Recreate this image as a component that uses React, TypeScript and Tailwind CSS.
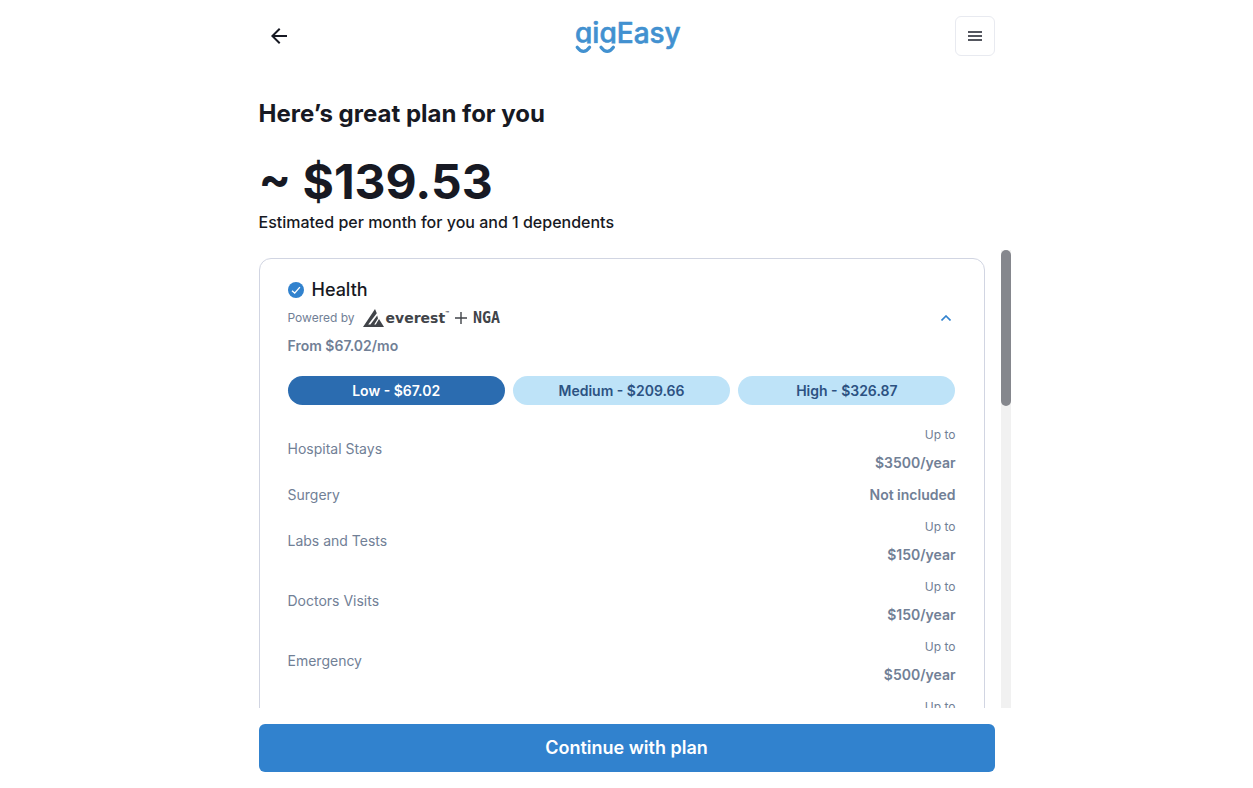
import { useState, type UIEvent } from 'react';

type Plan = { id: string; label: string };
type Benefit = { name: string; limit?: string; value: string };

const plans: Plan[] = [
  { id: 'low', label: 'Low - $67.02' },
  { id: 'medium', label: 'Medium - $209.66' },
  { id: 'high', label: 'High - $326.87' },
];

const benefits: Benefit[] = [
  { name: 'Hospital Stays', limit: 'Up to', value: '$3500/year' },
  { name: 'Surgery', value: 'Not included' },
  { name: 'Labs and Tests', limit: 'Up to', value: '$150/year' },
  { name: 'Doctors Visits', limit: 'Up to', value: '$150/year' },
  { name: 'Emergency', limit: 'Up to', value: '$500/year' },
  { name: 'Urgent Care', limit: 'Up to', value: '$150/year' },
];

function GigEasyLogo() {
  return (
    <svg width="104" height="36" viewBox="0 0 104 36" role="img" aria-label="gigEasy" className="overflow-visible">
      {/* The descenders of both g's are replaced by smiles. */}
      <clipPath id="wordmark">
        <path d="M-2-4H110V40H42V25.4H-2Z" />
      </clipPath>
      <text
        x="0"
        y="25"
        fontSize="28"
        fontWeight="500"
        fill="#4291d0"
        stroke="#4291d0"
        strokeWidth="0.6"
        strokeLinejoin="round"
        fontFamily="Inter, sans-serif"
        clipPath="url(#wordmark)"
      >
        gigEasy
      </text>
      <path
        d="M2.2 29.2Q8.4 37.6 14.6 29.2M26 29.2Q32.2 37.6 38.4 29.2"
        fill="none"
        stroke="#4291d0"
        strokeWidth="3.2"
        strokeLinecap="round"
      />
    </svg>
  );
}

function EverestLogo() {
  return (
    <span className="flex items-center gap-0.5">
      <svg width="21" height="18" viewBox="0 0 21 18" fill="currentColor" aria-hidden="true">
        <path d="M12 0 13.8 4.2 5.2 15.6H7.4L14.2 6.6 15 9.4 11.2 15.6H12.8L16 10 21 18H0Z" />
      </svg>
      <span className="flex items-center">
        <span className="font-['DejaVu_Sans',sans-serif] text-sm font-bold">everest</span>
        <span className="mb-2 text-[6px] leading-none font-bold">™</span>
      </span>
    </span>
  );
}

function Header() {
  return (
    <header className="flex items-center justify-between px-4 py-4">
      <button type="button" aria-label="Go back" className="flex size-10 items-center justify-center">
        <svg width="24" height="24" viewBox="0 0 24 24" fill="currentColor" aria-hidden="true">
          <path d="M20 11H7.83l5.59-5.59L12 4l-8 8 8 8 1.41-1.41L7.83 13H20v-2z" />
        </svg>
      </button>
      <GigEasyLogo />
      <button
        type="button"
        aria-label="Open menu"
        className="flex size-10 items-center justify-center rounded-md border border-[#e8eaf0] text-[#53565e]"
      >
        <svg width="14" height="10" viewBox="0 0 14 10" fill="currentColor" aria-hidden="true">
          <path d="M0 0h14v2H0zM0 4h14v2H0zM0 8h14v2H0z" />
        </svg>
      </button>
    </header>
  );
}

function HealthCard() {
  const [selected, setSelected] = useState('low');
  const [open, setOpen] = useState(true);

  return (
    <section className="rounded-xl border border-[#d1d5e2] px-7 pt-[17px] pb-6">
      <div className="flex items-center justify-between">
        <div>
          <h2 className="flex h-7 items-center gap-2 text-lg font-medium">
            <svg width="16" height="16" viewBox="0 0 16 16" aria-hidden="true">
              <circle cx="8" cy="8" r="8" fill="#3182ce" />
              <path d="m4 8.7 2.7 2.4 5.2-6" fill="none" stroke="#fff" strokeWidth="1.4" />
            </svg>
            Health
          </h2>
          <div className="flex h-7 items-center gap-2 text-xs text-[#718096]">
            Powered by
            <span className="flex items-center gap-1.5 text-[#414449]">
              <EverestLogo />
              <svg width="12" height="12" viewBox="0 0 12 12" stroke="currentColor" strokeWidth="1.4" aria-hidden="true">
                <path d="M6 0v12M0 6h12" />
              </svg>
              <span className="pt-0.5 font-['DejaVu_Sans_Mono',monospace] text-[15px] font-bold">NGA</span>
            </span>
          </div>
          <p className="text-sm leading-7 font-semibold text-[#718096]">From $67.02/mo</p>
        </div>
        <button
          type="button"
          aria-label="Toggle details"
          aria-expanded={open}
          onClick={() => setOpen(!open)}
          className="flex size-5 items-center justify-center text-[#3182ce]"
        >
          <svg width="10" height="6" viewBox="0 0 10 6" fill="none" stroke="currentColor" strokeWidth="1.6" aria-hidden="true">
            <path d="M.5 5.5 5 1l4.5 4.5" />
          </svg>
        </button>
      </div>
      <div className="mt-4 grid grid-cols-3 gap-2">
        {plans.map((plan) => (
          <button
            key={plan.id}
            type="button"
            aria-pressed={plan.id === selected}
            onClick={() => setSelected(plan.id)}
            className={
              plan.id === selected
                ? 'rounded-full bg-[#2b6cb0] py-1 text-sm leading-[21px] font-semibold text-white'
                : 'rounded-full bg-[#bee3f8] py-1 text-sm leading-[21px] font-semibold text-[#2c5282]'
            }
          >
            {plan.label}
          </button>
        ))}
      </div>
      {open && (
        <dl className="mt-4 flex flex-col gap-1 text-sm leading-7 text-[#718096]">
          {benefits.map((benefit) => (
            <div key={benefit.name} className="flex items-center justify-between">
              <dt>{benefit.name}</dt>
              <dd className="text-right font-semibold">
                {benefit.limit && <span className="block text-xs leading-7 font-normal">{benefit.limit}</span>}
                {benefit.value}
              </dd>
            </div>
          ))}
        </dl>
      )}
    </section>
  );
}

export default function App() {
  const [progress, setProgress] = useState(0);

  const handleScroll = (event: UIEvent<HTMLDivElement>) => {
    const { scrollTop, scrollHeight, clientHeight } = event.currentTarget;
    setProgress(scrollHeight > clientHeight ? scrollTop / (scrollHeight - clientHeight) : 0);
  };

  return (
    <div className="mx-auto flex h-screen max-w-3xl flex-col bg-white font-['Inter',sans-serif] text-[#171923]">
      <Header />
      <div className="px-4 pt-[26px] pb-4">
        <h1 className="text-2xl leading-8 font-bold">Here’s great plan for you</h1>
        <p className="mt-7 text-5xl font-bold">~ $139.53</p>
        <p className="mt-1 text-base font-medium">Estimated per month for you and 1 dependents</p>
      </div>
      <main className="flex min-h-0 flex-1">
        <div onScroll={handleScroll} className="min-w-0 flex-1 overflow-y-auto px-4 pt-2 pb-4 [scrollbar-width:none]">
          <HealthCard />
        </div>
        <div className="flex w-2.5 flex-col bg-[#f1f1f1]" aria-hidden="true">
          <div style={{ height: `${progress * 66}%` }} />
          <div className="h-[34%] shrink-0 rounded-full bg-[#85878d]" />
        </div>
      </main>
      <footer className="p-4">
        <button type="button" className="h-12 w-full rounded-md bg-[#3182ce] text-lg font-semibold text-white">
          Continue with plan
        </button>
      </footer>
    </div>
  );
}
